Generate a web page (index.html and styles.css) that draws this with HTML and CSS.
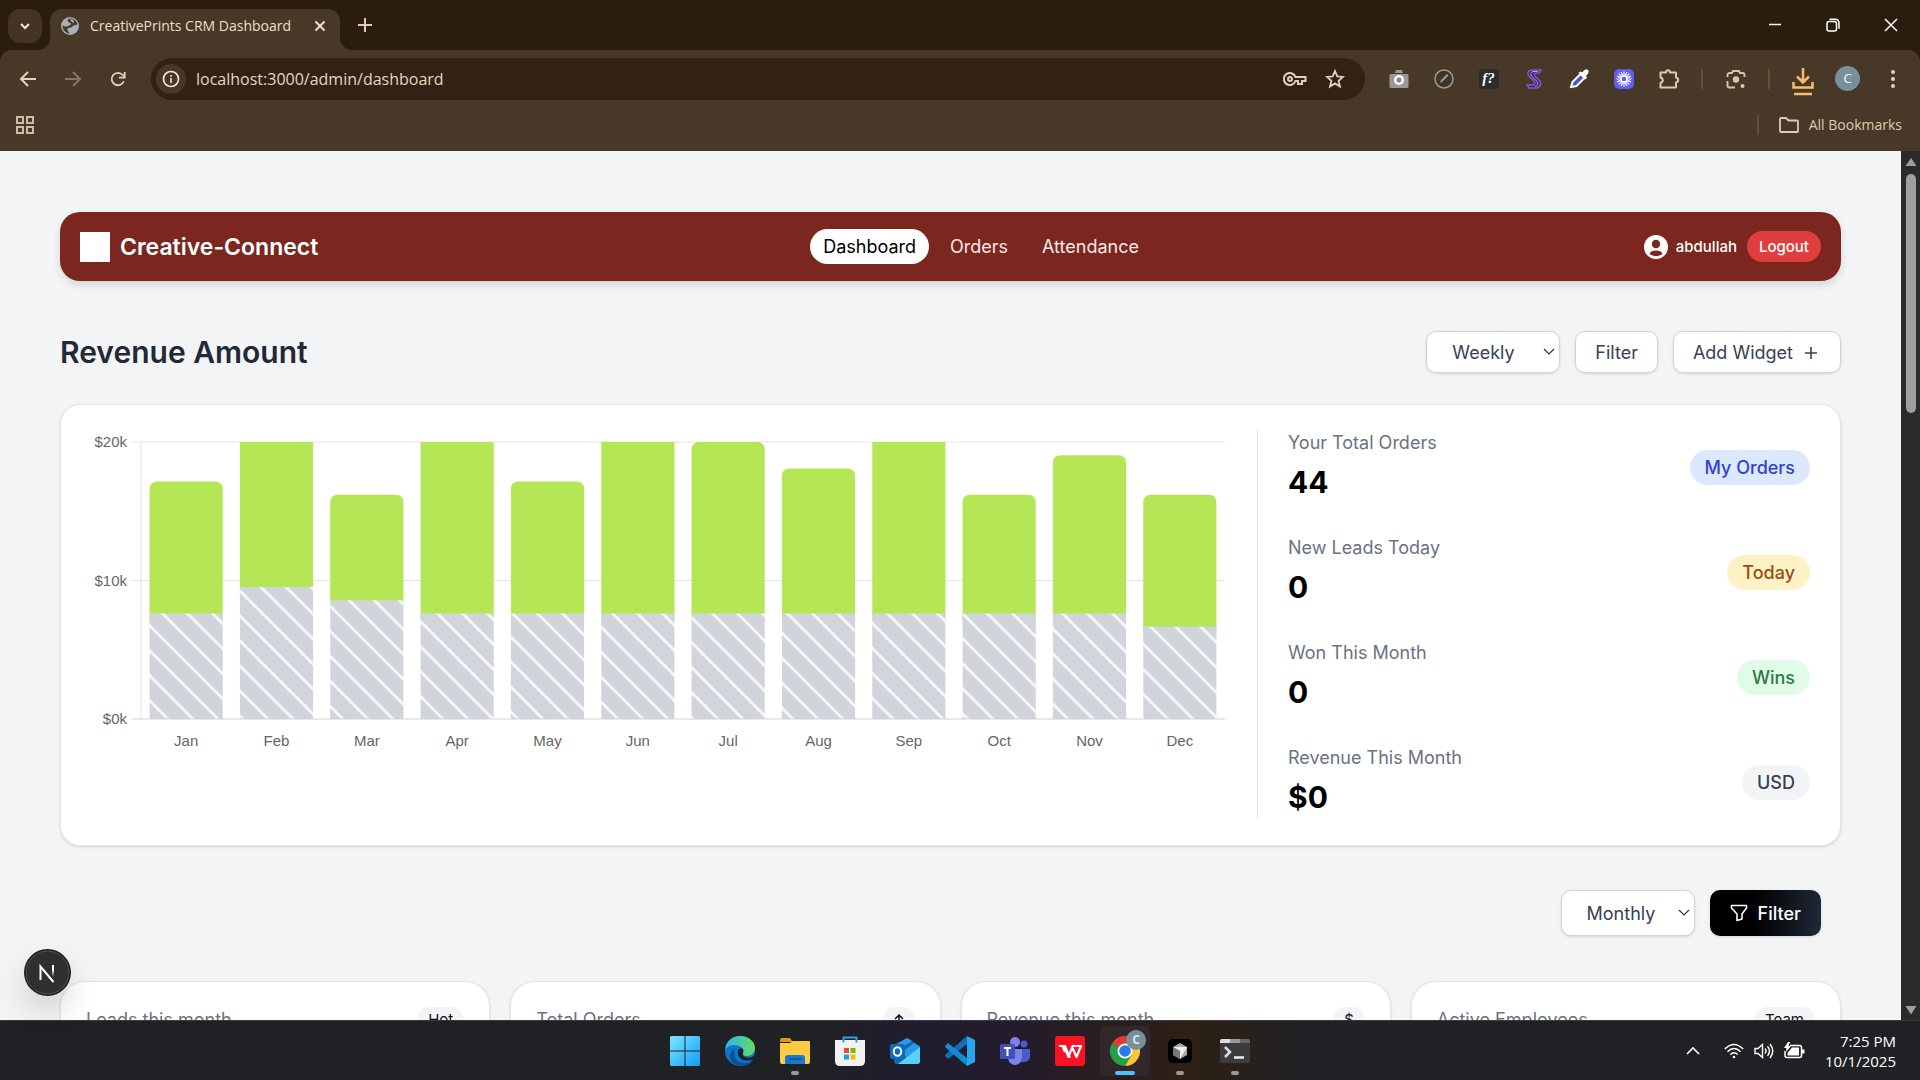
FILE: index.html
```html
<!DOCTYPE html>
<html lang="en">
<head>
<meta charset="utf-8">
<title>CreativePrints CRM Dashboard</title>
<link rel="stylesheet" href="styles.css">
</head>
<body>
<header class="browser">
  <div class="tabstrip">
    <button class="tab-search" aria-label="Search tabs"><svg width="12" height="12" viewBox="0 0 12 12"><path d="M2 4l4 4 4-4" fill="none" stroke="#f6e6d2" stroke-width="2"/></svg></button>
    <div class="tab">
      <svg width="20" height="20" viewBox="0 0 20 20"><circle cx="10" cy="10" r="9" fill="#a9b0b8"/><path d="M11 2.500c-3 0-4 1.500-3 3s3 1 3 2.500-2 1-3 2-3 .5-5.500-.5c0 4.500 3 7.500 7 8-.5-1.500-2-2-2-4s2-1.500 3.500-2 1.500-2 3-2 2-1.500 3.500-1C17 5.500 14.500 3 11 2.500z" fill="#483827"/><path d="M10.500 4c2 .3 3 1.200 2.500 2.500" fill="none" stroke="#a9b0b8" stroke-width="2"/></svg>
      <span class="tab-title">CreativePrints CRM Dashboard</span>
      <button class="plain" aria-label="Close tab"><svg width="12" height="12" viewBox="0 0 12 12"><path d="M1.500 1.500l9 9m0-9l-9 9" stroke="#f6e6d2" stroke-width="1.800"/></svg></button>
    </div>
    <button class="plain new-tab" aria-label="New tab"><svg width="14" height="14" viewBox="0 0 14 14"><path d="M7 0v14M0 7h14" stroke="#dfcdb6" stroke-width="2"/></svg></button>
    <div class="window-controls">
      <button class="plain" aria-label="Minimize"><svg width="14" height="14" viewBox="0 0 14 14"><path d="M1 6.500h12" stroke="#fff" stroke-width="1.500"/></svg></button>
      <button class="plain" aria-label="Restore"><svg width="14" height="14" viewBox="0 0 14 14" fill="none" stroke="#fff" stroke-width="1.500"><rect x="1" y="3.500" width="9.500" height="9.500" rx="2"/><path d="M3.500 1.200h6a3.500 3.500 0 0 1 3.500 3.500v6"/></svg></button>
      <button class="plain" aria-label="Close"><svg width="14" height="14" viewBox="0 0 14 14"><path d="M1 1l12 12M13 1L1 13" stroke="#fff" stroke-width="1.500"/></svg></button>
    </div>
  </div>
  <div class="toolbar">
    <div class="toolbar-row">
      <div class="icon-row">
        <button class="cell" aria-label="Back"><svg width="18" height="16" viewBox="0 0 18 16"><path d="M9 1L2 8l7 7M2 8h15" fill="none" stroke="#e5d3bc" stroke-width="2"/></svg></button>
        <button class="cell" aria-label="Forward"><svg width="18" height="16" viewBox="0 0 18 16"><path d="M9 1l7 7-7 7M16 8H1" fill="none" stroke="#867562" stroke-width="2"/></svg></button>
        <button class="cell" aria-label="Reload"><svg width="16" height="16" viewBox="0 0 18 18"><path d="M15.500 11.500A7 7 0 1 1 14.300 4.500L16 6.500" fill="none" stroke="#e5d3bc" stroke-width="2"/><path d="M16.500 1v6.500H10" fill="none" stroke="#e5d3bc" stroke-width="2"/></svg></button>
      </div>
      <div class="omnibox">
        <button class="site-info" aria-label="Site information"><svg width="18" height="18" viewBox="0 0 18 18"><circle cx="9" cy="9" r="7.500" fill="none" stroke="#f6e6d2" stroke-width="1.700"/><path d="M9 8v5M9 5v1.800" stroke="#f6e6d2" stroke-width="1.600"/></svg></button>
        <label class="url"><input class="url-input" aria-label="Address" value="localhost:3000/admin/dashboard"></label>
        <button class="plain" aria-label="Passwords"><svg width="24" height="16" viewBox="0 0 24 16" fill="none" stroke="#e0cfb9" stroke-width="2"><path d="M12.500 6A6 6 0 1 0 12.500 10H15v3h4v-3h3.500V6z"/><circle cx="7" cy="8" r="2"/></svg></button>
        <button class="plain" aria-label="Bookmark this tab"><svg width="20" height="20" viewBox="0 0 20 20"><path d="M10 2l2.300 5.400 5.700.5-4.400 3.800 1.400 5.800L10 14.400 5 17.500l1.400-5.800L2 7.900l5.700-.5z" fill="none" stroke="#e0cfb9" stroke-width="1.800"/></svg></button>
      </div>
      <div class="icon-row">
        <button class="cell" aria-label="Screenshot"><svg width="20" height="20" viewBox="0 0 20 20"><path d="M7 1h6l1 3h-8zM2 5h16a1.500 1.500 0 0 1 1.500 1.500v11A1.500 1.500 0 0 1 18 19H2A1.500 1.500 0 0 1 .5 17.500v-11A1.500 1.500 0 0 1 2 5z" fill="#999"/><circle cx="10" cy="11" r="5" fill="#fff"/><circle cx="10" cy="11" r="2.600" fill="#888"/></svg></button>
        <button class="cell" aria-label="Blocker"><svg width="20" height="20" viewBox="0 0 20 20"><circle cx="10" cy="10" r="9" fill="#3d3529" stroke="#a09a90" stroke-width="1.500"/><path d="M6 14l1-3 6-6 1.500 1.500-6 6z" fill="#a09a90"/></svg></button>
        <button class="cell" aria-label="Font finder"><span class="fn">f?</span></button>
        <button class="cell" aria-label="Stylebot"><svg width="18" height="20" viewBox="0 0 18 20"><path d="M16 1H6Q1 3 4 7l5 5q2 3-1 4H2l2 3h8q5-2 3-7l-5-5q-2-3 2-3h2z" fill="#3d2578" stroke="#8058cc" stroke-width="1.500"/><path d="M13 2.500H8Q4 4 7 7.500l5 5q2 4-2 5" fill="none" stroke="#b9a2e6"/></svg></button>
        <button class="cell" aria-label="Color picker"><svg width="20" height="20" viewBox="0 0 20 20"><path d="M2 18l1.500-5 8-8 4 4-8 8z" fill="#4854cf" stroke="#fff" stroke-width="2"/><path d="M9.500 3.500l2-1 1.500 1q4-5 6-2.500t-2 6l1 1.500-1.500 2z" fill="#fff"/></svg></button>
        <button class="cell" aria-label="Loom"><svg width="20" height="20" viewBox="0 0 20 20"><rect width="20" height="20" rx="5" fill="#625df5"/><path d="M10 2.500v15M2.500 10h15M4.700 4.700l10.600 10.600M15.300 4.700L4.700 15.300M7.100 3.100l5.800 13.800M12.900 3.100L7.100 16.900M3.100 7.100l13.800 5.800M3.100 12.900l13.800-5.800" stroke="#fff" stroke-width="1.200"/><circle cx="10" cy="10" r="2.800" fill="#625df5" stroke="#fff"/></svg></button>
        <button class="cell" aria-label="Extensions"><svg width="22" height="22" viewBox="0 0 22 22"><path d="M2.500 4.500H8c0-3 4-3 4 0h6v5c3 .5 3 4.500 0 5v5h-15.500v-4.500c3-1 3-4.500 0-5.500z" fill="none" stroke="#e0c9a9" stroke-width="2" stroke-linejoin="round"/></svg></button>
        <span class="sep"></span>
        <button class="cell" aria-label="Lens"><svg width="20" height="20" viewBox="0 0 20 20"><path d="M1.500 8V6a2 2 0 0 1 2-2H6l1-2h6l1 2h2.500a2 2 0 0 1 2 2v2M1.500 12v4.500a2 2 0 0 0 2 2H9" fill="none" stroke="#dcc5a8" stroke-width="1.900"/><circle cx="10" cy="10.500" r="3.200" fill="#dcc5a8"/><circle cx="16.500" cy="17" r="2" fill="#dcc5a8"/></svg></button>
        <span class="sep"></span>
        <button class="cell" aria-label="Downloads"><svg class="download" width="22" height="28" viewBox="0 0 22 28"><path d="M11 0v14M5 8.500l6 6 6-6M1.500 14v5.500h19V14M2 26h18" fill="none" stroke="#f8bd6a" stroke-width="2.500"/></svg></button>
        <button class="cell" aria-label="Profile"><span class="profile">C</span></button>
        <button class="cell" aria-label="Menu"><svg width="6" height="20" viewBox="0 0 6 20" fill="#e5d3bc"><circle cx="3" cy="3" r="2"/><circle cx="3" cy="10" r="2"/><circle cx="3" cy="17" r="2"/></svg></button>
      </div>
    </div>
    <div class="bookmarks">
      <button class="plain" aria-label="Apps"><svg width="18" height="18" viewBox="0 0 18 18" fill="none" stroke="#cdbca6" stroke-width="2"><path d="M1 1h6v6H1zM11 1h6v6h-6zM1 11h6v6H1zM11 11h6v6h-6z"/></svg></button>
      <button class="plain all-bookmarks"><svg width="20" height="16" viewBox="0 0 20 16"><path d="M1 14V2a1 1 0 0 1 1-1h5l2.500 2.500H18a1 1 0 0 1 1 1V14a1 1 0 0 1-1 1H2a1 1 0 0 1-1-1z" fill="none" stroke="#dccbb5" stroke-width="1.800"/></svg>All Bookmarks</button>
    </div>
  </div>
</header>

<div class="viewport">
  <main class="page">
    <nav class="navbar">
      <div class="brand"><span class="brand-mark"></span>Creative-Connect</div>
      <div class="nav-links">
        <a class="nav-link active" href="#dashboard">Dashboard</a>
        <a class="nav-link" href="#orders">Orders</a>
        <a class="nav-link" href="#attendance">Attendance</a>
      </div>
      <div class="account">
        <svg width="24" height="24" viewBox="0 0 24 24"><circle cx="12" cy="12" r="12" fill="#fff"/><circle cx="12" cy="9" r="4.200" fill="#7b2720"/><path d="M5.500 18.500c1.500-4 11.500-4 13 0-3 3.500-10 3.500-13 0z" fill="#7b2720"/></svg>
        <span class="user">abdullah</span>
        <button class="logout">Logout</button>
      </div>
    </nav>

    <div class="heading">
      <h1 class="title">Revenue Amount</h1>
      <div class="actions">
        <label class="select"><select class="control select-box" aria-label="Revenue period"><option>Weekly</option></select><svg class="caret" width="12" height="8" viewBox="0 0 12 8"><path d="M1 1l5 5 5-5" fill="none" stroke="#333" stroke-width="1.200"/></svg></label>
        <button class="control">Filter</button>
        <button class="control">Add Widget<svg width="20" height="20" viewBox="0 0 20 20"><path d="M10 5v12M4 11h12" stroke="#374151" stroke-width="1.600"/></svg></button>
      </div>
    </div>

    <section class="card revenue">
      <div class="chart">
        <div class="y-axis"><span>$20k</span><span>$10k</span><span>$0k</span></div>
        <div class="plot-area">
          <svg class="plot" id="plot" role="img" aria-label="Revenue by month">
            <defs><pattern id="stripes" width="25" height="25" patternUnits="userSpaceOnUse"><rect width="25" height="25" fill="#d1d5db"/><path d="M-25 -25L50 50M-50 -25L25 50M0 -25L75 50" stroke="#f5f6f8" stroke-width="3"/></pattern></defs>
          </svg>
          <div class="x-axis" id="months"></div>
        </div>
      </div>
      <div class="stats">
        <div class="stat"><div><div class="label">Your Total Orders</div><div class="value">44</div></div><span class="pill blue">My Orders</span></div>
        <div class="stat"><div><div class="label">New Leads Today</div><div class="value">0</div></div><span class="pill amber">Today</span></div>
        <div class="stat"><div><div class="label">Won This Month</div><div class="value">0</div></div><span class="pill green">Wins</span></div>
        <div class="stat"><div><div class="label">Revenue This Month</div><div class="value">$0</div></div><span class="pill gray">USD</span></div>
      </div>
    </section>

    <div class="actions filters">
      <label class="select"><select class="control select-box tall" aria-label="Summary period"><option>Monthly</option></select><svg class="caret" width="12" height="8" viewBox="0 0 12 8"><path d="M1 1l5 5 5-5" fill="none" stroke="#333" stroke-width="1.200"/></svg></label>
      <button class="control tall dark"><svg width="18" height="18" viewBox="0 0 18 18"><path d="M1.500 1.500h15v2.500l-4.500 6v5l-5 1.500V10L1.500 4z" fill="none" stroke="#fff" stroke-width="1.600" stroke-linejoin="round"/></svg>Filter</button>
    </div>

    <section class="summary">
      <article class="card tile"><span class="label">Leads this month</span><span class="tag">Hot</span></article>
      <article class="card tile"><span class="label">Total Orders</span><span class="tag"><svg width="10" height="14" viewBox="0 0 10 14"><path d="M5 13V2M1 6l4-4 4 4" fill="none" stroke="#111" stroke-width="1.500"/></svg></span></article>
      <article class="card tile"><span class="label">Revenue this month</span><span class="tag">$</span></article>
      <article class="card tile"><span class="label">Active Employees</span><span class="tag">Team</span></article>
    </section>
  </main>
  <div class="scrollbar">
    <svg width="12" height="8" viewBox="0 0 12 8"><path d="M6 0l5.500 8H.5z" fill="#9f9f9f"/></svg>
    <div class="track"><div class="thumb"></div></div>
    <svg width="12" height="10" viewBox="0 0 12 10"><path d="M6 9.500L.5 1h11z" fill="#9f9f9f"/></svg>
  </div>
  <button class="dev-badge" aria-label="Dev tools"><svg width="47" height="47" viewBox="0 0 47 47"><defs><linearGradient id="nfade" x1="0" y1="0" x2="0" y2="1"><stop offset=".4" stop-color="#fff"/><stop offset="1" stop-color="#fff" stop-opacity="0"/></linearGradient></defs><circle cx="23.500" cy="23.500" r="23.500" fill="#1c1c1c"/><circle cx="23.500" cy="23.500" r="21.500" fill="#2f2f2f" stroke="#555"/><path d="M16.500 31V17.500L29.500 33" fill="none" stroke="#fff" stroke-width="2"/><rect x="28" y="16" width="2" height="12" fill="url(#nfade)"/></svg></button>
</div>

<footer class="taskbar">
  <div></div>
  <div class="apps">
    <button class="app" aria-label="Start"><svg width="30" height="30" viewBox="0 0 30 30"><defs><linearGradient id="win" x1="0" y1="0" x2="1" y2="1"><stop stop-color="#7ce8ff"/><stop offset="1" stop-color="#119cf5"/></linearGradient></defs><path d="M0 1.500Q0 0 1.500 0H14.500V14.500H0zM15.500 0h13Q30 0 30 1.500v13H15.500zM0 15.500h14.500V30h-13Q0 30 0 28.500zM15.500 15.500H30v13q0 1.500-1.500 1.500h-13z" fill="url(#win)"/></svg></button>
    <button class="app" aria-label="Edge"><svg width="30" height="30" viewBox="0 0 30 30"><defs><linearGradient id="edge" x1="0" x2="1"><stop stop-color="#2fb3ef"/><stop offset="1" stop-color="#62dd5c"/></linearGradient></defs><circle cx="15" cy="15" r="15" fill="#1272c9"/><path d="M0 14C1 5 7 0 15 0c9 0 15 6 15 12 0 5-4 8-8 8-3 0-5-1-4-3s1-5-4-7C9 8 3 9 0 14z" fill="url(#edge)"/><path d="M10 13c-3 7 2 14 9 14 4 0 7-1 9.500-4C25 31 13 32 7 26c-4-5-2-11 3-13z" fill="#0c4f96"/><path d="M13 15c1-3 4-3 5-1 1 2-1 3 0 5 2 4 9 3 12 0v2l-2 2c-8 4-16 0-15-8z" fill="#202125"/></svg></button>
    <button class="app running" aria-label="File Explorer"><svg width="32" height="28" viewBox="0 0 32 28"><path d="M1 3q0-2 2-2h8l3 4H1z" fill="#d79b0c"/><path d="M1 6h10l3-2h16q1 0 1 1v20q0 2-2 2H3q-2 0-2-2z" fill="#ffcb42"/><path d="M6 27v-6q0-3 3-3h14q3 0 3 3v6z" fill="#1679cf"/><path d="M10 22h12" stroke="#0c5396" stroke-width="1.500"/></svg></button>
    <button class="app" aria-label="Store"><svg width="30" height="30" viewBox="0 0 30 30"><path d="M0 4h30v21q0 5-5 5H5q-5 0-5-5z" fill="#f2f2f2"/><path d="M8.500 6.500V1.500h13v5" fill="none" stroke="#24a4e6" stroke-width="2"/><path d="M9 12h5v5H9z" fill="#e65024"/><path d="M15.500 12h5v5h-5z" fill="#7eb900"/><path d="M9 18.500h5v5H9z" fill="#16a2ea"/><path d="M15.500 18.500h5v5h-5z" fill="#fbb800"/></svg></button>
    <button class="app" aria-label="Outlook"><svg width="30" height="28" viewBox="0 0 30 28"><path d="M4 8L17 1l13 8v15q0 3-3 3H7q-3 0-3-3z" fill="#1565b4"/><path d="M5 8L17 1l5 3-12 8zM12 15l12-9 6 4-13 11z" fill="#2a9ae8"/><path d="M30 10v14q0 3-3 3H8z" fill="#5bd2f5"/><rect y="7" width="15" height="15" rx="2" fill="#0f6cbd"/><ellipse cx="7.500" cy="14.500" rx="3.700" ry="4.200" fill="none" stroke="#fff" stroke-width="2"/></svg></button>
    <button class="app" aria-label="Visual Studio Code"><svg width="30" height="30" viewBox="0 0 30 30"><path d="M22 0v8L3 23l-3-3v-1z" fill="#0d70b8"/><path d="M22 30v-8L3 7 0 10v1z" fill="#128bd6"/><path d="M22 0l8 4v22l-8 4z" fill="#26a5f2"/></svg></button>
    <button class="app" aria-label="Teams"><svg width="32" height="28" viewBox="0 0 32 28"><circle cx="25" cy="7" r="3.500" fill="#5059c9"/><path d="M20 12h11v8q-1 5-6 5h-5z" fill="#5059c9"/><circle cx="16" cy="5" r="5" fill="#7b83eb"/><path d="M9 12h14v8q-1 8-7 8t-7-7z" fill="#7b83eb"/><rect x="1" y="7" width="15" height="15" rx="1.500" fill="#464eb8"/><path d="M5 11h7M8.500 11v8" stroke="#fff" stroke-width="2"/></svg></button>
    <button class="app" aria-label="WPS Office"><svg width="30" height="30" viewBox="0 0 30 30"><rect width="30" height="30" rx="3" fill="#fb1325"/><path d="M4 10h6l4 10 3.500-10H26l-4.500 11L17 11M10 16l-2.500-6M9 10l4.500 11h2" fill="none" stroke="#fff" stroke-width="2.200" stroke-linejoin="round"/></svg></button>
    <button class="app running active-app" aria-label="Chrome"><svg width="30" height="30" viewBox="0 0 30 30"><path d="M15 15L2 7.500A15 15 0 0 1 28 7.500z" fill="#e33b2e"/><path d="M15 15L2 7.500A15 15 0 0 0 15 30l6.500-11z" fill="#24a148"/><path d="M15 15V7.500h13A15 15 0 0 1 15 30l6.500-11z" fill="#fcc934"/><circle cx="15" cy="15" r="7.500" fill="#fff"/><circle cx="15" cy="15" r="5.800" fill="#2a7de8"/></svg><span class="app-profile">C</span></button>
    <button class="app running" aria-label="Cursor"><svg width="24" height="24" viewBox="0 0 24 24"><rect width="24" height="24" rx="5" fill="#000"/><path d="M12 4l7 4v8l-7 4-7-4V8z" fill="#aaa"/><path d="M5 8h14l-7 12v-8z" fill="#eee"/><path d="M5 8l7 4v8l-7-4z" fill="#777"/></svg></button>
    <button class="app running" aria-label="Terminal"><svg width="30" height="24" viewBox="0 0 30 24"><rect width="30" height="24" rx="2" fill="#3c3c3c"/><path d="M0 4V2q0-2 2-2h8v4z" fill="#ddd"/><path d="M10 0h10v4H10z" fill="#999"/><path d="M20 0h8q2 0 2 2v2H20z" fill="#666"/><path d="M5 8l5 5-5 5" fill="none" stroke="#ddd" stroke-width="2.500"/><path d="M14 18.500h10" stroke="#eee" stroke-width="2.500"/></svg></button>
  </div>
  <div class="tray">
    <svg class="tray-more" width="14" height="9" viewBox="0 0 14 9"><path d="M1 8l6-6 6 6" fill="none" stroke="#fff" stroke-width="1.600"/></svg>
    <svg width="20" height="16" viewBox="0 0 20 16" fill="none" stroke="#fff" stroke-width="1.500"><path d="M.8 6q9.200-9 18.400 0M3.500 8.800q6.500-6.500 13 0M6.300 11.500q3.700-3.500 7.400 0"/><circle cx="10" cy="14" r="1.300" fill="#fff" stroke="none"/></svg>
    <svg width="20" height="16" viewBox="0 0 20 16" fill="none" stroke="#fff" stroke-width="1.400"><path d="M1 5.500h3L8.500 1.500v13L4 10.500H1zM11 5.500q2 2.500 0 5M13.500 3.200q4 4.800 0 9.600M16 1q5.500 7 0 14"/></svg>
    <svg width="21" height="17" viewBox="0 0 21 17"><path d="M6 3.500h9.500a2 2 0 0 1 2 2v8a2 2 0 0 1-2 2H3a2 2 0 0 1-2-2V9" fill="none" stroke="#fff" stroke-width="1.500"/><path d="M8 5.500h7v8H3.500V11zM18 7.500h2.500v4H18zM4 0L0 6h2.500L2 10l5-6H4.500L6 0z" fill="#fff"/></svg>
    <div class="clock"><span>7:25 PM</span><span>10/1/2025</span></div>
  </div>
</footer>
<script src="chart.js"></script>
</body>
</html>
```
FILE: styles.css
```css
* { box-sizing: border-box; }
body { margin: 0; height: 100vh; display: flex; flex-direction: column; overflow: hidden; font-family: Inter, "Liberation Sans", sans-serif; font-size: 18px; }
button, input, select { font: inherit; color: inherit; border: 0; margin: 0; padding: 0; background: none; }
svg { display: block; flex: none; }

/* Browser chrome */
.browser { background: #2b1d0e; color: #f0dfc9; font-family: "Open Sans", "Noto Sans", sans-serif; font-size: 15px; flex: none; }
.tabstrip { height: 50px; display: flex; align-items: flex-start; padding: 9px 0 0 8px; }
.plain { display: flex; align-items: center; justify-content: center; }
.tab-search { width: 34px; height: 34px; border-radius: 12px; background: #443424; display: flex; align-items: center; justify-content: center; }
.tab { position: relative; width: 290px; height: 41px; margin-left: 8px; padding: 0 14px 8px 10px; border-radius: 12px 12px 0 0; background: #483827; display: flex; align-items: center; gap: 10px; }
.tab::before, .tab::after { content: ""; position: absolute; bottom: 0; width: 12px; height: 12px; }
.tab::before { left: -12px; background: radial-gradient(circle at 0 0, transparent 12px, #483827 12px); }
.tab::after { right: -12px; background: radial-gradient(circle at 100% 0, transparent 12px, #483827 12px); }
.tab-title { flex: 1; white-space: nowrap; font-size: 14px; }
.new-tab { width: 30px; height: 32px; margin-left: 10px; }
.window-controls { margin-left: auto; display: flex; }
.window-controls .plain { width: 58px; height: 32px; }
.toolbar { height: 101px; background: #483827; border-radius: 12px 12px 0 0; }
.toolbar-row { height: 57px; display: flex; align-items: center; gap: 11px; padding: 0 5px; }
.icon-row { display: flex; align-items: center; }
.cell { width: 45px; height: 42px; display: flex; align-items: center; justify-content: center; }
.omnibox { flex: 1; height: 42px; border-radius: 21px; background: #312213; display: flex; align-items: center; gap: 18px; padding: 0 20px 0 5px; }
.site-info { width: 30px; height: 30px; border-radius: 50%; background: #483827; display: flex; align-items: center; justify-content: center; }
.url { flex: 1; display: flex; margin-left: -8px; }
.url-input { width: 100%; font-size: 16px; color: #e6d6c2; }
.fn { width: 20px; height: 20px; border-radius: 3px; background: #2c2c2c; color: #fff; font: italic bold 15px/18px "Liberation Serif", serif; text-align: center; }
.sep { width: 22px; height: 20px; display: flex; justify-content: center; }
.sep::before { content: ""; width: 2px; background: #655038; }
.download { margin-top: 6px; }
.profile { width: 25px; height: 25px; border-radius: 50%; background: #78909c; color: #fff; font-size: 13px; line-height: 25px; text-align: center; }
.bookmarks { height: 35px; display: flex; align-items: center; justify-content: space-between; padding: 0 18px 0 16px; }
.all-bookmarks { gap: 10px; height: 20px; padding-left: 20px; border-left: 2px solid #655038; font-size: 14px; color: #dccbb5; }

/* Page */
.viewport { position: relative; flex: 1; min-height: 0; display: flex; background: #f3f4f6; }
.page { flex: 1; min-width: 0; overflow: hidden; padding: 61px 60px 0; }
.scrollbar { width: 19px; background: #2b2b2b; display: flex; flex-direction: column; align-items: center; padding: 7px 0 5px; }
.track { flex: 1; padding: 8px 0; }
.thumb { width: 10px; height: 29%; border-radius: 5px; background: #9f9f9f; }
.navbar { height: 69px; padding: 0 20px; border-radius: 20px; background: #7b2720; color: #fff; display: flex; justify-content: space-between; align-items: center; box-shadow: 0 4px 8px rgba(0, 0, 0, .12); }
.brand { display: flex; align-items: center; gap: 10px; font-size: 23px; font-weight: 600; }
.brand-mark { width: 30px; height: 30px; background: #fff; }
.nav-links { display: flex; gap: 8px; }
.nav-link { height: 35px; line-height: 35px; padding: 0 13px; border-radius: 18px; color: #fbe9e7; text-decoration: none; }
.nav-link.active { background: #fff; color: #000; }
.account { display: flex; align-items: center; gap: 8px; }
.user { font-size: 15px; font-weight: 500; }
.logout { height: 31px; margin-left: 2px; padding: 0 12px; border-radius: 16px; background: #e03e3e; color: #fff; font-size: 15px; font-weight: 500; }
.heading { display: flex; align-items: center; justify-content: space-between; height: 42px; margin-top: 50px; }
.title { margin: 0; font-size: 30px; font-weight: 600; color: #1f2937; }
.actions { display: flex; gap: 15px; }
.control { height: 42px; padding: 0 19px; border: 1px solid #d1d5db; border-radius: 10px; background: #fff; color: #374151; display: flex; align-items: center; gap: 8px; box-shadow: 0 1px 3px rgba(0, 0, 0, .12); }
.select { position: relative; }
.select-box { appearance: none; width: 134px; padding-left: 25px; }
.caret { position: absolute; right: 5px; top: 50%; margin-top: -4px; }
.tall { height: 46px; }
.dark { border: 0; padding: 0 20px; gap: 10px; background: linear-gradient(90deg, #000 40%, #1f2937); color: #fff; font-weight: 500; }
.card { background: #fff; border: 1px solid #e2e5e9; border-radius: 20px; box-shadow: 0 1px 3px rgba(0, 0, 0, .12); }
.revenue { margin-top: 31px; padding: 25px 30px; display: grid; grid-template-columns: minmax(0, 1fr) 553px; }
.chart { display: flex; padding: 12px 32px 0 0; font: 15px/20px "Liberation Sans", Arial, sans-serif; color: #666; }
.y-axis { width: 50px; height: 297px; margin-top: -10px; padding-right: 14px; display: flex; flex-direction: column; justify-content: space-between; text-align: right; }
.plot-area { flex: 1; min-width: 0; }
.plot { width: 100%; height: 277px; overflow: visible; }
.x-axis { display: grid; grid-template-columns: repeat(12, 1fr); margin-top: 12px; text-align: center; }
.stats { border-left: 1px solid #e2e5e9; padding-left: 30px; display: flex; flex-direction: column; gap: 30px; }
.stat { height: 75px; display: flex; justify-content: space-between; align-items: center; }
.label { line-height: 25px; color: #6b7280; }
.value { margin-top: 5px; line-height: 45px; font-size: 30px; font-weight: 700; color: #000; }
.pill { height: 35px; line-height: 35px; padding: 0 15px; border-radius: 18px; font-weight: 500; }
.blue { background: #dbe8fd; color: #3142cf; }
.amber { background: #fdf2c6; color: #9a4c12; }
.green { background: #e0fbe8; color: #2f7a3f; }
.gray { background: #f3f4f6; color: #374151; }
.filters { justify-content: flex-end; padding-right: 20px; margin-top: 44px; }
.summary { display: grid; grid-template-columns: repeat(4, 1fr); gap: 20px; margin-top: 45px; }
.tile { height: 190px; padding: 25px; border-radius: 25px; display: flex; justify-content: space-between; align-items: flex-start; }
.tag { min-height: 25px; line-height: 25px; padding: 0 11px; border-radius: 13px; background: #f3f4f6; color: #111; font-size: 15px; display: flex; align-items: center; }
.dev-badge { position: absolute; left: 24px; bottom: 24px; border-radius: 50%; box-shadow: 0 16px 32px rgba(0, 0, 0, .14); }

/* Taskbar */
.taskbar { flex: none; height: 60px; display: grid; grid-template-columns: 1fr auto 1fr; align-items: center; border-top: 1px solid #3a3b3e; background: linear-gradient(90deg, #202125 42%, #201d2e 48%, #241c2c 53%, #2e2014 62%, #202125 68%); color: #fff; font-family: "Open Sans", "Noto Sans", sans-serif; }
.apps { display: flex; gap: 5px; }
.app { position: relative; width: 50px; height: 50px; border-radius: 5px; display: flex; align-items: center; justify-content: center; }
.running::after { content: ""; position: absolute; bottom: 1px; width: 8px; height: 4px; border-radius: 2px; background: #9a9a9a; }
.active-app { background: #33272b; }
.active-app::after { width: 20px; background: #4cc2ff; }
.app-profile { position: absolute; right: 4px; top: 4px; width: 20px; height: 20px; border-radius: 50%; background: #78909c; color: #dfe6ea; font: bold 12px/20px "Open Sans", sans-serif; }
.tray { justify-self: end; display: flex; align-items: center; gap: 10px; padding-right: 24px; }
.tray-more { margin-right: 14px; }
.clock { display: flex; flex-direction: column; text-align: right; font-size: 15px; line-height: 20px; margin-left: 10px; }
```
FILE: chart.js
```js
// Stacked monthly bars, in units of the axis (21 units fill the plot).
const AXIS_MAX = 21;
const data = [
  ["Jan", 8, 18], ["Feb", 10, 22], ["Mar", 9, 17], ["Apr", 8, 22],
  ["May", 8, 18], ["Jun", 8, 22], ["Jul", 8, 21], ["Aug", 8, 19],
  ["Sep", 8, 22], ["Oct", 8, 17], ["Nov", 8, 20], ["Dec", 7, 17]
];
const NS = "http://www.w3.org/2000/svg";
const plot = document.getElementById("plot");
const months = document.getElementById("months");

function add(parent, name, attrs) {
  const el = document.createElementNS(NS, name);
  for (const key in attrs) el.setAttribute(key, attrs[key]);
  parent.appendChild(el);
  return el;
}

for (const y of ["0%", "50%"]) {
  add(plot, "line", { x1: -9, x2: "100%", y1: y, y2: y, stroke: "#e5e5e5" });
}
add(plot, "line", { x1: 0, x2: 0, y1: 0, y2: "100%", stroke: "#e0e0e0" });
const bars = add(plot, "svg", { width: "100%", height: "100%", overflow: "hidden" });

data.forEach(([name, base, total], i) => {
  const x = (i + 0.095) / 12 * 100 + "%";
  const width = 0.81 / 12 * 100 + "%";
  const top = (1 - total / AXIS_MAX) * 100 + "%";
  const split = (1 - base / AXIS_MAX) * 100 + "%";
  // The green bar runs one unit under the striped one, which hides its lower corners.
  add(bars, "rect", { x, width, y: top, height: (total - base + 1) / AXIS_MAX * 100 + "%", rx: 7, fill: "#b4e655" });
  add(bars, "rect", { x, width, y: split, height: base / AXIS_MAX * 100 + "%", fill: "url(#stripes)" });
  const label = document.createElement("span");
  label.textContent = name;
  months.appendChild(label);
});
add(plot, "line", { x1: -9, x2: "100%", y1: "100%", y2: "100%", stroke: "#cfd2d6" });
```
